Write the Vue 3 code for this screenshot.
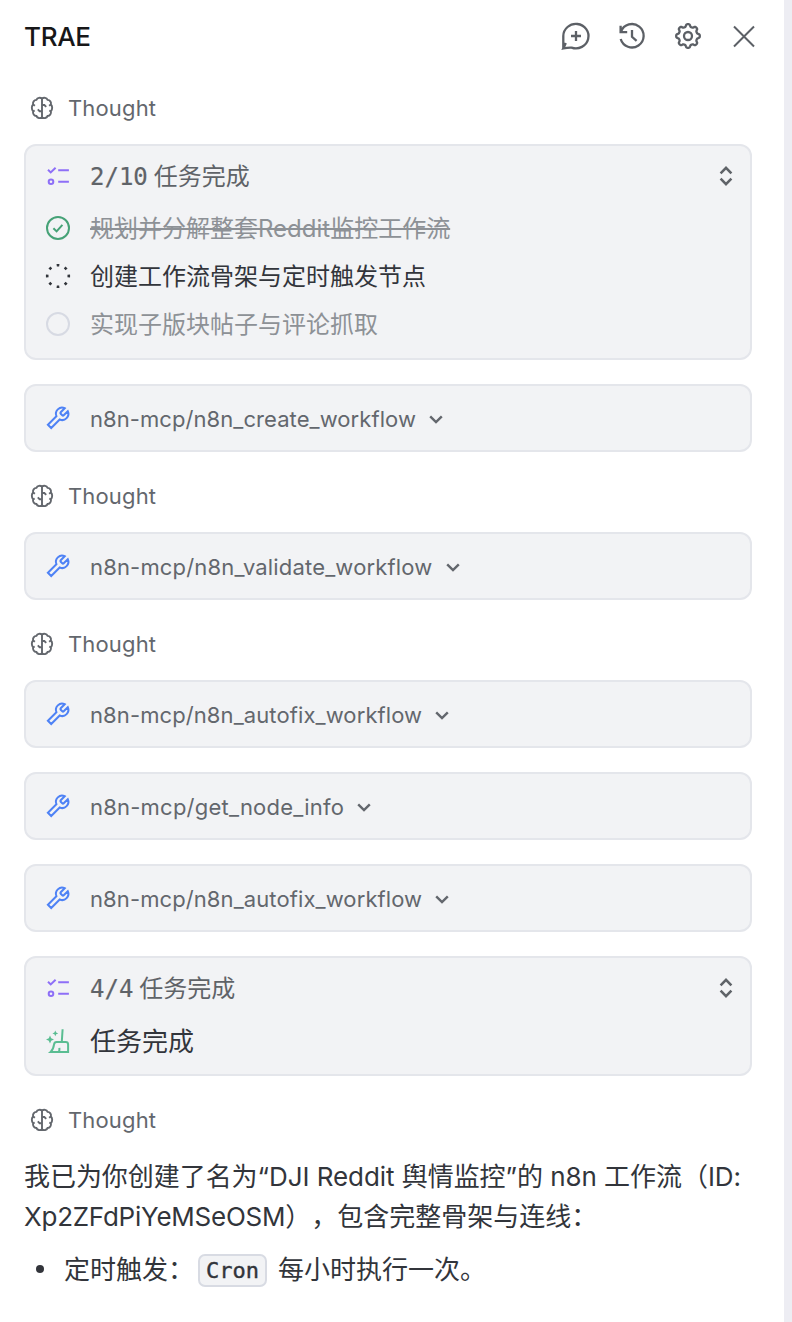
<script setup>
const feed = [
  { type: 'thought' },
  {
    type: 'tasks',
    count: '2/10',
    rows: [
      { state: 'done', text: '规划并分解整套Reddit监控工作流' },
      { state: 'active', text: '创建工作流骨架与定时触发节点' },
      { state: 'todo', text: '实现子版块帖子与评论抓取' },
    ],
  },
  { type: 'tool', name: 'n8n-mcp/n8n_create_workflow', tracking: 0.07 },
  { type: 'thought' },
  { type: 'tool', name: 'n8n-mcp/n8n_validate_workflow', tracking: 0.17 },
  { type: 'thought' },
  { type: 'tool', name: 'n8n-mcp/n8n_autofix_workflow', tracking: 0.1 },
  { type: 'tool', name: 'n8n-mcp/get_node_info', tracking: 0.22 },
  { type: 'tool', name: 'n8n-mcp/n8n_autofix_workflow', tracking: 0.1 },
  { type: 'tasks', count: '4/4', rows: [{ state: 'clean', text: '任务完成' }] },
  { type: 'thought' },
]

// Eight-toothed gear outline centred in a 32px box
const gear =
  'M' +
  Array.from({ length: 128 }, (_, i) => {
    const a = (i / 128) * Math.PI * 2
    const r = 10.6 + 1.25 * Math.tanh(2 * Math.cos(8 * a))
    return `${(16 + r * Math.sin(a)).toFixed(2)} ${(16 - r * Math.cos(a)).toFixed(2)}`
  }).join('L') +
  'Z'
</script>

<template>
  <main class="panel">
    <header class="bar">
      <h1>TRAE</h1>
      <nav class="actions">
        <svg viewBox="0 0 32 32" class="action">
          <path d="M3.3 28.2V16.1A12.6 12.2 0 1 1 11.6 27.6Q8 27.4 3.3 28.4L5.8 23" />
          <path d="M16 11v10M11 16h10" />
        </svg>
        <svg viewBox="0 0 32 32" class="action">
          <path d="M4.6 5.8v6.4h6.6M5 11.6A11.7 11.7 0 1 1 4.7 19M16 10v6.8l4.6 4" />
        </svg>
        <svg viewBox="0 0 32 32" class="action">
          <path :d="gear" stroke-linejoin="round" />
          <circle cx="16" cy="16" r="4" />
        </svg>
        <svg viewBox="0 0 32 32" class="action thin">
          <path d="M6 6.5 26 26.5M26 6.5 6 26.5" />
        </svg>
      </nav>
    </header>

    <template v-for="(item, i) in feed" :key="i">
      <div v-if="item.type === 'thought'" class="thought">
        <svg viewBox="0 0 24 24" class="brain">
          <path d="M12 2.6C10.2 1.3 7.4 1.6 6.4 3.9 4 4.1 2.6 6.2 3.1 8.5 1.4 10.2 1.4 13.4 3.1 15.3 2.6 17.6 4 19.8 6.4 20 7.4 22.3 10.2 22.6 12 21.4 13.8 22.6 16.6 22.3 17.6 20 20 19.8 21.4 17.6 20.9 15.3 22.6 13.4 22.6 10.2 20.9 8.5 21.4 6.2 20 4.1 17.6 3.9 16.6 1.6 13.8 1.3 12 2.6Z" />
          <path d="M12 2.6v18.8M12 15.2H9.6L7.8 13.4M12 9h2.4l1.8 1.8M3.1 8.5l1.8 1.3M20.9 8.5l-1.8 1.3M3.1 15.3l1.6-.8M20.9 15.3l-1.6-.8" />
        </svg>
        <span>Thought</span>
      </div>

      <section v-else-if="item.type === 'tool'" class="card tool">
        <svg viewBox="0 0 24 24" class="icon wrench">
          <path d="M14.7 6.3a1 1 0 0 0 0 1.4l1.6 1.6a1 1 0 0 0 1.4 0l4.1-4.1a6.2 6.2 0 0 1-8.1 8.3L5.2 22 1.9 18.7l8.5-8.5a6.2 6.2 0 0 1 8.3-8Z" />
        </svg>
        <span class="tool-name" :style="{ letterSpacing: item.tracking + 'px' }">{{ item.name }}</span>
        <svg viewBox="0 0 16 16" class="chevron"><path d="m2.2 5.3 5.8 5.8 5.8-5.8" /></svg>
      </section>

      <section v-else class="card tasks">
        <div class="row head">
          <svg viewBox="0 0 24 24" class="icon list">
            <path d="m2 5.8 2.7 2.6 4.9-4.7M12.2 6.3H22.9M12.2 17.8H22.9" />
            <circle cx="5" cy="17.8" r="2.3" />
          </svg>
          <span class="count">{{ item.count }}</span>
          <span class="label">任务完成</span>
          <svg viewBox="0 0 16 24" class="expand"><path d="M2.6 9.3 8 3.9l5.4 5.4M2.6 14.7 8 20.1l5.4-5.4" /></svg>
        </div>
        <div v-for="row in item.rows" :key="row.text" class="row" :class="row.state">
          <svg v-if="row.state === 'done'" viewBox="0 0 24 24" class="icon">
            <circle cx="12" cy="12" r="11" />
            <path d="m7.4 12.2 3.2 3.2 5.8-6.6" />
          </svg>
          <svg v-else-if="row.state === 'active'" viewBox="0 0 24 24" class="icon">
            <circle cx="12" cy="12" r="10.8" pathLength="80" class="dots" />
          </svg>
          <svg v-else-if="row.state === 'todo'" viewBox="0 0 24 24" class="icon">
            <circle cx="12" cy="12" r="11" />
          </svg>
          <svg v-else viewBox="0 0 24 24" class="icon broom">
            <path d="M16.6.2 15.8 12.8M10.6 13h9.1q2.4 0 2.4 2.4V22.9H4.6C7 20.8 7.6 18.6 8 15.6Q8.3 13 10.6 13ZM13 22.9q.6-2 .4-4" />
            <path class="star" d="M4 6.5 5.2 9.3 8 10.5 5.2 11.7 4 14.5 2.8 11.7 0 10.5 2.8 9.3ZM9.3 1.5l.9 2 2 .9-2 .9-.9 2-.9-2-2-.9 2-.9Z" />
          </svg>
          <span class="label">{{ row.text }}</span>
        </div>
      </section>
    </template>

    <article class="answer">
      <p><span class="line one">我已为你创建了名为“DJI Reddit 舆情监控”的 n8n 工作流（ID:</span><span class="line"><span class="flow-id">Xp2ZFdPiYeMSeOSM</span>），包含完整骨架与连线：</span></p>
      <ul>
        <li><span class="lead">定时触发：</span><code>Cron</code><span>每小时执行一次。</span></li>
      </ul>
    </article>
  </main>
</template>

<style>
html,
body {
  background: #fff;
  overflow: hidden;
}
</style>

<style scoped>
.panel {
  box-sizing: border-box;
  width: 792px;
  height: 1322px;
  padding: 0 32px 0 24px;
  border-right: 8px solid #ededf3;
  background: #fff;
  color: #32353b;
  font-family: Inter, "Noto Sans CJK SC", sans-serif;
  overflow: hidden;
}
svg {
  fill: none;
  stroke: currentColor;
  stroke-width: 2;
  flex: none;
  overflow: visible;
}
.bar {
  height: 72px;
  display: flex;
  align-items: center;
  justify-content: space-between;
}
h1 {
  margin: 2px 0 0;
  font-size: 26px;
  line-height: 32px;
  font-weight: 540;
  letter-spacing: -0.3px;
  color: #171718;
}
.actions {
  display: flex;
  gap: 24px;
  margin-right: -8px;
  color: #5c6066;
}
.action {
  width: 32px;
  height: 32px;
  stroke-width: 2.3;
}
.action.thin {
  stroke-width: 2;
}
.thought {
  height: 32px;
  margin: 28px 0 20px 6px;
  display: flex;
  align-items: center;
  gap: 14px;
  font-size: 22px;
  letter-spacing: 0.15px;
  color: #63676d;
}
.bar + .thought {
  margin-top: 20px;
}
.brain {
  width: 24px;
  height: 24px;
  stroke-width: 1.9;
}
.card {
  box-sizing: border-box;
  border: 2px solid #e4e6eb;
  border-radius: 12px;
  background: #f2f3f5;
  padding: 0 16px 0 20px;
}
.card + .card {
  margin-top: 24px;
}
.icon {
  width: 24px;
  height: 24px;
  margin-right: 20px;
}
.tool {
  height: 68px;
  display: flex;
  align-items: center;
  font-size: 22px;
  color: #63676d;
}
.tool-name {
  padding-top: 2px;
}
.wrench {
  color: #4e82f5;
}
.chevron {
  width: 16px;
  height: 16px;
  margin: 2px 0 0 12px;
  stroke-width: 2.4;
}
.tasks {
  padding-top: 6px;
  padding-bottom: 10px;
}
.row {
  height: 48px;
  display: flex;
  align-items: center;
  font-size: 24px;
  line-height: 36px;
}
.label {
  padding-top: 2px;
}
.head {
  margin-bottom: 4px;
  color: #5f6368;
}
.count {
  font-family: "DejaVu Sans Mono", monospace;
  margin: 2px 6px 0 0;
  -webkit-text-stroke: 0.2px currentColor;
}
.list {
  color: #8e6ff7;
}
.expand {
  width: 16px;
  height: 24px;
  margin-left: auto;
  stroke-width: 2.6;
}
.done {
  color: #8d9196;
  text-decoration: line-through;
  text-decoration-thickness: 2px;
}
.done .icon {
  color: #46a277;
}
.todo {
  color: #8d9196;
}
.todo .icon {
  color: #d7dae3;
}
.active .icon {
  color: #32353b;
}
.dots {
  stroke-width: 2.6;
  stroke-dasharray: 3.2 6.8;
  stroke-dashoffset: 1.6;
}
.clean {
  font-size: 26px;
}
.clean .label {
  padding-top: 4px;
}
.clean .icon {
  color: #5abd92;
}
.broom {
  position: relative;
  top: 1px;
}
.star {
  fill: currentColor;
  stroke: none;
}
.answer {
  font-size: 26px;
  line-height: 40px;
  text-spacing-trim: space-all;
}
.thought + .answer {
  margin-top: 21px;
}
.answer p {
  margin: 0;
}
.line {
  display: block;
  white-space: nowrap;
}
.one {
  letter-spacing: -0.05px;
}
.flow-id {
  letter-spacing: -0.25px;
}
ul {
  margin: 13px 0 0;
  padding: 0;
  list-style: none;
}
li {
  display: flex;
  align-items: center;
}
li::before {
  content: "";
  width: 8px;
  height: 8px;
  margin: 0 20px 2px 12px;
  border-radius: 50%;
  background: currentColor;
}
.lead {
  width: 134px;
  white-space: nowrap;
}
code {
  box-sizing: border-box;
  width: 69px;
  height: 33px;
  margin-right: 11px;
  border: 2px solid #d8dbe3;
  border-radius: 7px;
  background: #f2f3f5;
  font: 22px/30px "DejaVu Sans Mono", monospace;
  -webkit-text-stroke: 0.4px currentColor;
  text-align: center;
}
</style>
